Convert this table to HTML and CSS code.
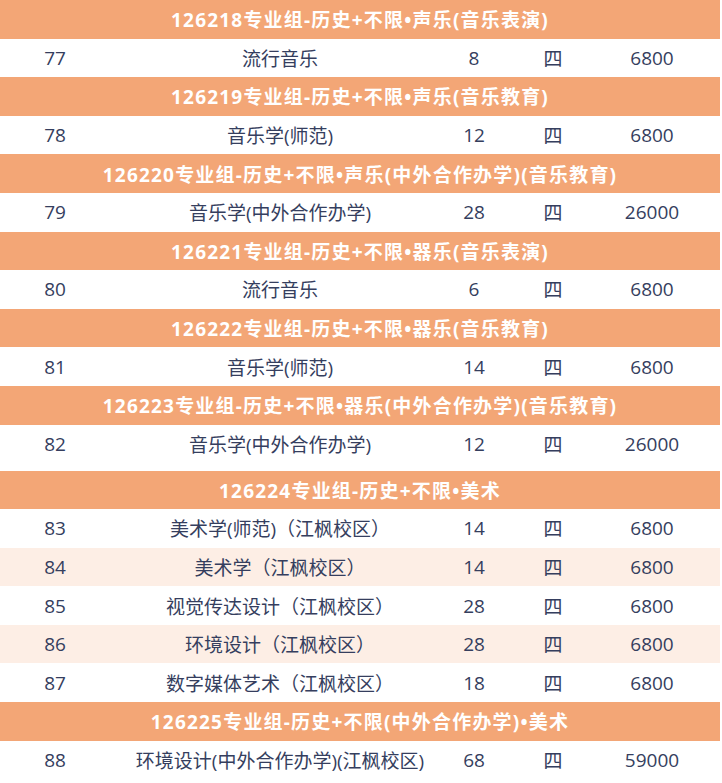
FILE: index.html
```html
<!DOCTYPE html>
<html lang="zh-CN">
<head>
<meta charset="utf-8">
<title>专业组</title>
<link rel="stylesheet" href="styles.css">
</head>
<body>
<div class="table">
  <div class="group">126218专业组-历史+不限•声乐(音乐表演)</div>
  <div class="row"><span>77</span><span>流行音乐</span><span>8</span><span>四</span><span class="fee">6800</span></div>
  <div class="group">126219专业组-历史+不限•声乐(音乐教育)</div>
  <div class="row"><span>78</span><span>音乐学(师范)</span><span>12</span><span>四</span><span class="fee">6800</span></div>
  <div class="group">126220专业组-历史+不限•声乐(中外合作办学)(音乐教育)</div>
  <div class="row"><span>79</span><span>音乐学(中外合作办学)</span><span>28</span><span>四</span><span class="fee">26000</span></div>
  <div class="group">126221专业组-历史+不限•器乐(音乐表演)</div>
  <div class="row"><span>80</span><span>流行音乐</span><span>6</span><span>四</span><span class="fee">6800</span></div>
  <div class="group">126222专业组-历史+不限•器乐(音乐教育)</div>
  <div class="row"><span>81</span><span>音乐学(师范)</span><span>14</span><span>四</span><span class="fee">6800</span></div>
  <div class="group">126223专业组-历史+不限•器乐(中外合作办学)(音乐教育)</div>
  <div class="row row-last"><span>82</span><span>音乐学(中外合作办学)</span><span>12</span><span>四</span><span class="fee">26000</span></div>
  <div class="group">126224专业组-历史+不限•美术</div>
  <div class="row"><span>83</span><span>美术学(师范)（江枫校区）</span><span>14</span><span>四</span><span class="fee">6800</span></div>
  <div class="row alt"><span>84</span><span>美术学（江枫校区）</span><span>14</span><span>四</span><span class="fee">6800</span></div>
  <div class="row"><span>85</span><span>视觉传达设计（江枫校区）</span><span>28</span><span>四</span><span class="fee">6800</span></div>
  <div class="row alt"><span>86</span><span>环境设计（江枫校区）</span><span>28</span><span>四</span><span class="fee">6800</span></div>
  <div class="row"><span>87</span><span>数字媒体艺术（江枫校区）</span><span>18</span><span>四</span><span class="fee">6800</span></div>
  <div class="group">126225专业组-历史+不限(中外合作办学)•美术</div>
  <div class="row"><span>88</span><span>环境设计(中外合作办学)(江枫校区)</span><span>68</span><span>四</span><span class="fee">59000</span></div>
</div>
</body>
</html>
```
FILE: styles.css
```css
html, body {
  margin: 0;
  padding: 0;
  background: #ffffff;
}
body {
  font-family: "Open Sans", "Noto Sans CJK SC", sans-serif;
  font-size: 19px;
  color: #353e5e;
}
.table {
  width: 720px;
  display: flex;
  flex-direction: column;
}
.group {
  height: 38.6px;
  background: #f3a676;
  color: #ffffff;
  font-weight: 700;
  letter-spacing: 1.2px;
  display: flex;
  align-items: center;
  justify-content: center;
  box-sizing: border-box;
}
.row {
  height: 38.6px;
  display: grid;
  grid-template-columns: 110px 340px 48px 110px 1fr;
  align-items: center;
  text-align: center;
  white-space: nowrap;
}
.row span {
  display: block;
}
.row .fee {
  padding-right: 24px;
}
.row.alt {
  background: #fdeee5;
}
.row-last {
  margin-bottom: 7.4px;
}
```
